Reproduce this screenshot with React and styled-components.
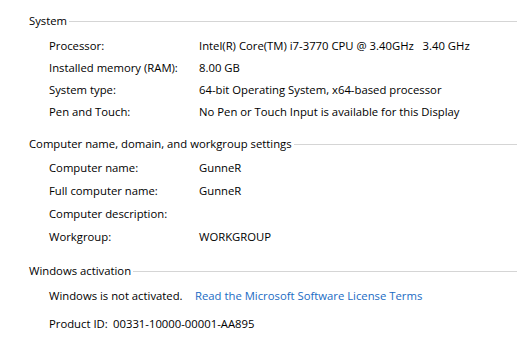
import styled, { createGlobalStyle } from "styled-components";

const GlobalStyle = createGlobalStyle`
  html, body {
    margin: 0;
    padding: 0;
    background: #ffffff;
  }
  body {
    font-family: "Open Sans", "Noto Sans", "Liberation Sans", sans-serif;
    font-size: 11.3px;
    color: #000000;
  }
`;

const Page = styled.main`
  width: 517px;
  height: 352px;
  padding: 12px 0 0 29px;
  box-sizing: border-box;
  overflow: hidden;
`;

const Section = styled.section`
  display: flex;
  flex-direction: column;
  margin-bottom: ${(p) => p.$after}px;
`;

const Header = styled.div`
  display: flex;
  align-items: center;
  height: 16px;
  margin-bottom: ${(p) => p.$gap}px;

  span {
    white-space: nowrap;
    padding-right: 2px;
  }

  &::after {
    content: "";
    flex: 1;
    height: 1px;
    background: #d5d5d5;
    margin-top: 2px;
  }
`;

const Row = styled.div`
  display: grid;
  grid-template-columns: 150px 1fr;
  align-items: center;
  height: ${(p) => p.$h}px;
  padding-left: 20px;
  white-space: pre;
`;

const Inline = styled.div`
  display: flex;
  align-items: center;
  height: ${(p) => p.$h}px;
  padding-left: 20px;
  white-space: pre;
`;

const Status = styled.span`
  width: 146px;
`;

const Link = styled.a`
  color: #1a6bc4;
  text-decoration: none;
  cursor: pointer;
`;

const ProductLabel = styled.span`
  width: 64px;
`;

const system = [
  ["Processor:", "Intel(R) Core(TM) i7-3770 CPU @ 3.40GHz   3.40 GHz"],
  ["Installed memory (RAM):", "8.00 GB"],
  ["System type:", "64-bit Operating System, x64-based processor"],
  ["Pen and Touch:", "No Pen or Touch Input is available for this Display"],
];

const computer = [
  ["Computer name:", "GunneR"],
  ["Full computer name:", "GunneR"],
  ["Computer description:", ""],
  ["Workgroup:", "WORKGROUP"],
];

export default function App() {
  return (
    <>
      <GlobalStyle />
      <Page>
        <Section $after={13}>
          <Header $gap={6}>
            <span>System</span>
          </Header>
          {system.map(([label, value]) => (
            <Row key={label} $h={22}>
              <span>{label}</span>
              <span>{value}</span>
            </Row>
          ))}
        </Section>

        <Section $after={14}>
          <Header $gap={5}>
            <span>Computer name, domain, and workgroup settings</span>
          </Header>
          {computer.map(([label, value]) => (
            <Row key={label} $h={23}>
              <span>{label}</span>
              <span>{value}</span>
            </Row>
          ))}
        </Section>

        <Section $after={0}>
          <Header $gap={6}>
            <span>Windows activation</span>
          </Header>
          <Inline $h={22}>
            <Status>Windows is not activated.</Status>
            <Link>Read the Microsoft Software License Terms</Link>
          </Inline>
          <Inline $h={6} />
          <Inline $h={22}>
            <ProductLabel>Product ID:</ProductLabel>
            <span>00331-10000-00001-AA895</span>
          </Inline>
        </Section>
      </Page>
    </>
  );
}
